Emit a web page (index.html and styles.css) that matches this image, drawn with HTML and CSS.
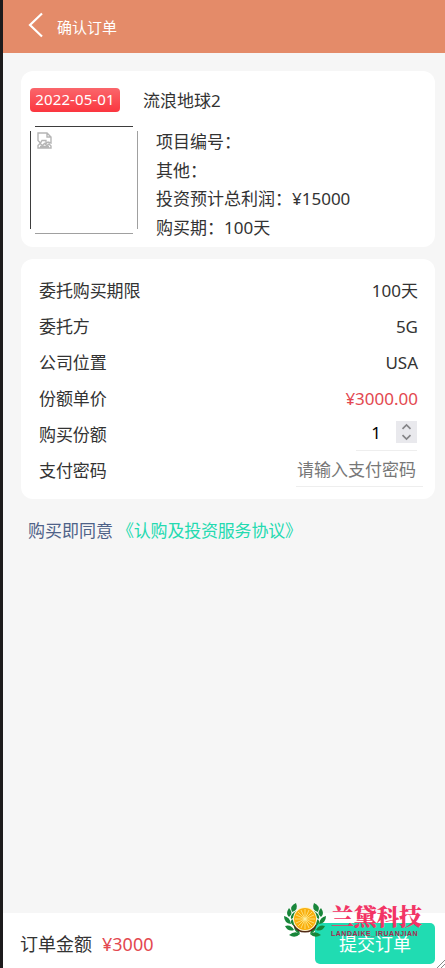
FILE: index.html
```html
<!DOCTYPE html>
<html lang="zh-CN">
<head>
<meta charset="utf-8">
<meta name="viewport" content="width=device-width, initial-scale=1">
<title>确认订单</title>
<link rel="stylesheet" href="styles.css">
</head>
<body>
<div class="page">
  <header class="header">
    <svg class="back" width="16" height="26" viewBox="0 0 16 26"><path d="M14 1.5 2 13 14 24.5"/></svg>
    <h1 class="title">确认订单</h1>
  </header>
  <main class="content">
    <section class="card product">
      <div class="product-head">
        <span class="date">2022-05-01</span>
        <span class="name">流浪地球2</span>
      </div>
      <div class="product-body">
        <div class="thumb">
          <svg width="108" height="108" viewBox="0 0 108 108">
            <path class="edge-dark" d="M5 .5h98M.5 5v98"/>
            <path class="edge-light" d="M107.500 5v98M5 107.500h98"/>
            <path class="broken" d="M8 14.500V7h9l4 4v6l-3-1-2 1.500v-3h-4l-1.500 2.500zM17 7v4h4M8 22v-2.500l2-2 2.500 2 2-2 2.500 2 2-1.500 2 2V22zM10 20.500h9"/>
          </svg>
        </div>
        <ul class="info">
          <li>项目编号：</li>
          <li>其他：</li>
          <li>投资预计总利润：¥15000</li>
          <li>购买期：100天</li>
        </ul>
      </div>
    </section>
    <section class="card details">
      <div class="row"><span>委托购买期限</span><span>100天</span></div>
      <div class="row"><span>委托方</span><span>5G</span></div>
      <div class="row"><span>公司位置</span><span>USA</span></div>
      <div class="row"><span>份额单价</span><span class="price">¥3000.00</span></div>
      <div class="row"><span>购买份额</span>
        <span class="quantity"><span>1</span>
          <svg class="spinner" width="21" height="22" viewBox="0 0 21 22"><path d="m6.500 7.800 4-3.800 4 3.800M6.500 14.200l4 3.800 4-3.800"/></svg>
        </span>
      </div>
      <div class="row"><span>支付密码</span><span class="password">请输入支付密码</span></div>
    </section>
    <p class="agreement">购买即同意<a class="link">《认购及投资服务协议》</a></p>
  </main>
  <footer class="footer">
    <span class="total">订单金额<span class="price">¥3000</span></span>
    <button class="submit">提交订单</button>
    <div class="brand">
      <svg width="42" height="38" viewBox="0 0 42 38">
        <defs>
          <g id="leaves">
            <path d="M12 1q-7 3-4 9 7-2 4-9zM5 6q-4 6 0 9 5-4 0-9zM0 14q0 7 7 8-1-7-7-8zM1 24q3 6 9 4-3-6-9-4zM5 33q6 4 11-1-5-4-11 1z"/>
            <path d="M12 9q-6 3-5 8 6-2 5-8zM8 17q4 4 2 7-5-3-2-7zM10 24q5 2 6 8-6-2-6-8z"/>
          </g>
        </defs>
        <g class="leaf"><use href="#leaves"/><use href="#leaves" transform="matrix(-1 0 0 1 42 0)"/></g>
        <path class="shade" d="M10 23a12.500 12.500 0 0 0 22 0"/>
        <circle class="orange" cx="21" cy="17" r="12"/>
        <circle class="rind" cx="21" cy="17" r="11"/>
        <path class="segments" d="M21 7v20M11 17h20M14 10l14 14M28 10 14 24M17 8l8 18M25 8l-8 18M12 13l18 8M30 13l-18 8"/>
      </svg>
      <div class="brand-text"><span class="brand-name">兰黛科技</span><span class="brand-latin">LANDAIKE_IRUANJIAN</span></div>
    </div>
    <svg class="grip" width="8" height="8" viewBox="0 0 8 8"><path d="M0 8 8 0M4 8l4-4"/></svg>
  </footer>
</div>
</body>
</html>
```
FILE: styles.css
```css
* { box-sizing: border-box; }
body {
  margin: 0;
  color: #333;
  font: 17px/24px "Noto Sans", "Noto Sans CJK SC", sans-serif;
}
svg { display: block; fill: none; }
.page {
  display: flex;
  flex-direction: column;
  height: 968px;
  border-left: 3px solid #1d1b1c;
  background: #f6f6f6;
  overflow: hidden;
}
.header {
  display: flex;
  align-items: center;
  gap: 13px;
  height: 53px;
  padding: 0 25px;
  background: #e48b69;
  color: #fff;
}
.back { margin-bottom: 3px; stroke: #fff; stroke-width: 2.2; }
.title { margin: 1px 0 0; font-size: 15px; font-weight: 400; }
.content { flex: 1; padding: 18px 10px 0 18px; }
.card { border-radius: 12px; background: #fff; }
.product { height: 176px; padding: 17px 9px 0; }
.product-head { display: flex; align-items: center; gap: 23px; height: 24px; }
.date {
  width: 90px;
  height: 24px;
  border-radius: 4px;
  background: linear-gradient(#fa666b, #fb363f);
  color: #fff;
  font-size: 15px;
  letter-spacing: .1px;
  line-height: 23px;
  text-align: center;
}
.name { margin-top: 2px; }
.product-body { display: flex; gap: 18px; padding-top: 14px; }
.thumb { width: 108px; height: 108px; }
.edge-dark { stroke: #3d3d3d; }
.edge-light { stroke: #a0a0a0; }
.broken { stroke: #b5b5b5; stroke-width: 1.4; }
.info { margin: 2px 0 0; padding: 0; list-style: none; line-height: 28.5px; }
.details { height: 240px; margin-top: 12px; padding: 14px 17px 0 18px; }
.row { display: flex; justify-content: space-between; align-items: center; height: 36px; }
.row > span:first-child { letter-spacing: -.1px; }
.price { color: #e34850; }
.quantity {
  display: flex;
  align-items: center;
  justify-content: flex-end;
  gap: 15px;
  width: 61px;
  height: 31px;
  margin-right: 1px;
  padding-bottom: 5px;
  border-bottom: 1px solid #eee;
  color: #000;
}
.quantity > span { padding-top: 2px; }
.spinner { background: #e9e9ed; stroke: #858588; stroke-width: 1.7; }
.password {
  width: 127px;
  height: 31px;
  margin-right: -5px;
  padding-left: 1px;
  border-bottom: 1px solid #eee;
  color: #777;
  line-height: 28px;
}
.agreement { margin: 20px 0 0 7px; color: #4e6288; }
.link { margin-left: 4px; color: #24dab0; letter-spacing: -.2px; }
.footer {
  position: relative;
  display: flex;
  justify-content: space-between;
  height: 55px;
  padding: 10px 10px 0 17px;
  background: #fff;
}
.total { margin-top: 9px; font-size: 18px; }
.total .price { margin-left: 10px; }
.submit {
  width: 120px;
  height: 41px;
  padding: 1px 0 0;
  border: 0;
  border-radius: 5px;
  background: #20dcb2;
  color: #fff;
  font: inherit;
  font-size: 18px;
}
.brand { position: absolute; top: -11px; left: 281px; display: flex; }
.brand-text { display: flex; flex-direction: column; margin-left: 5px; }
.brand-name {
  height: 27px;
  color: #f23465;
  font: 900 23px/27px "Noto Serif CJK SC", "Noto Sans CJK SC", serif;
  letter-spacing: -.3px;
  white-space: nowrap;
}
.brand-latin { color: #a62b50; font: 700 7px/10px "Liberation Sans", sans-serif; letter-spacing: .5px; white-space: nowrap; }
.leaf { fill: #18863a; }
.shade { stroke: #512b16; stroke-width: 2; }
.orange { fill: #fff3c8; }
.rind { fill: #f9af0d; }
.segments { stroke: #fff1a0; stroke-width: .7; }
.grip { position: absolute; right: 0; bottom: 0; stroke: #888; }
```
